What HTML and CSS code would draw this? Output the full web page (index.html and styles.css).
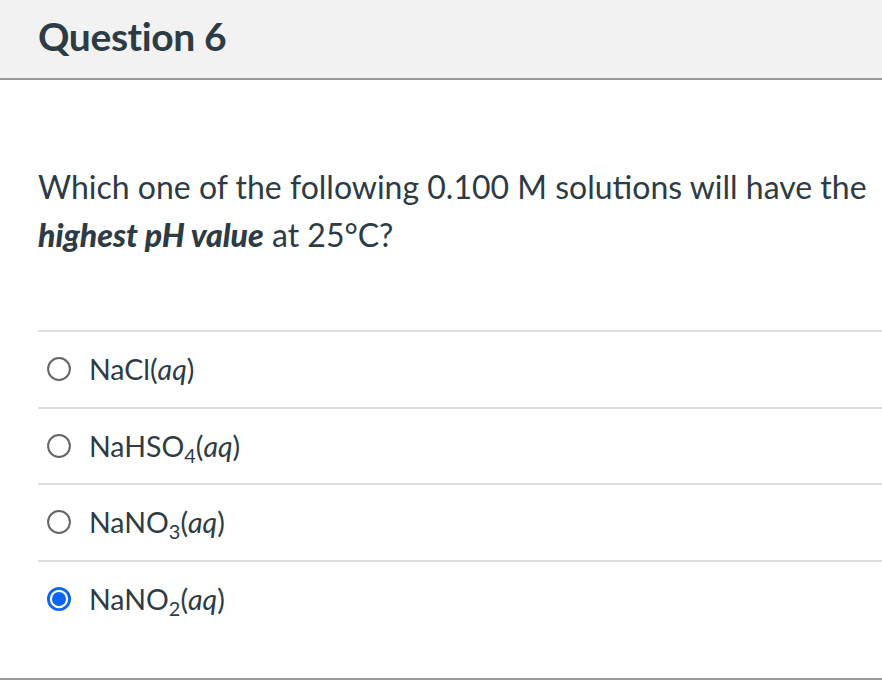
FILE: index.html
```html
<!DOCTYPE html>
<html>
<head>
<meta charset="utf-8">
<link rel="stylesheet" href="styles.css">
</head>
<body>
<div class="question">
  <div class="header"><h2 class="title">Question 6</h2></div>
  <div class="body">
    <p class="text">Which one of the following 0.100 M solutions will have the <strong><em>highest pH value</em></strong> at 25°C?</p>
    <div class="answers">
      <label class="answer"><svg class="radio" viewBox="0 0 24 24"><circle cx="12" cy="12" r="10.9" fill="#fff" stroke="#666" stroke-width="2"/></svg><span class="label">NaCl(<em>aq</em>)</span></label>
      <label class="answer"><svg class="radio" viewBox="0 0 24 24"><circle cx="12" cy="12" r="10.9" fill="#fff" stroke="#666" stroke-width="2"/></svg><span class="label">NaHSO<sub>4</sub>(<em>aq</em>)</span></label>
      <label class="answer"><svg class="radio" viewBox="0 0 24 24"><circle cx="12" cy="12" r="10.9" fill="#fff" stroke="#666" stroke-width="2"/></svg><span class="label">NaNO<sub>3</sub>(<em>aq</em>)</span></label>
      <label class="answer"><svg class="radio" viewBox="0 0 24 24"><circle cx="12" cy="12" r="10.6" fill="#fff" stroke="#0d64f0" stroke-width="2.8"/><circle cx="12" cy="12" r="7" fill="#0d64f0"/></svg><span class="label">NaNO<sub>2</sub>(<em>aq</em>)</span></label>
    </div>
  </div>
</div>
</body>
</html>
```
FILE: styles.css
```css
html, body {
  margin: 0;
  padding: 0;
  background: #fff;
}
body {
  font-family: Lato, "Noto Sans", sans-serif;
  color: #2d3b45;
}
.question {
  width: 882px;
  border-bottom: 2px solid #999;
}
.header {
  background: #f2f2f2;
  height: 80px;
  border-bottom: 2px solid #999;
  display: flex;
  align-items: center;
  padding-left: 38px;
  padding-bottom: 6px;
  box-sizing: border-box;
}
.title {
  margin: 0;
  font-size: 39px;
  font-weight: 700;
  color: #2d3b45;
  letter-spacing: -0.4px;
}
.body {
  padding: 83px 0 42px 38px;
}
.text {
  margin: 0;
  font-size: 32px;
  line-height: 48px;
}
.text strong {
  font-weight: 900;
}
.answers {
  margin-top: 71px;
  display: flex;
  flex-direction: column;
}
.answer {
  display: flex;
  align-items: center;
  height: 74.5px;
  border-top: 2px solid #ddd;
  padding-left: 9px;
}
.radio {
  width: 24px;
  height: 24px;
  flex: none;
  display: block;
}
.label {
  margin-left: 18px;
  font-size: 28.5px;
  line-height: 34px;
}
.label sub {
  font-size: 0.7em;
  line-height: 0;
  vertical-align: -0.3em;
}
```
